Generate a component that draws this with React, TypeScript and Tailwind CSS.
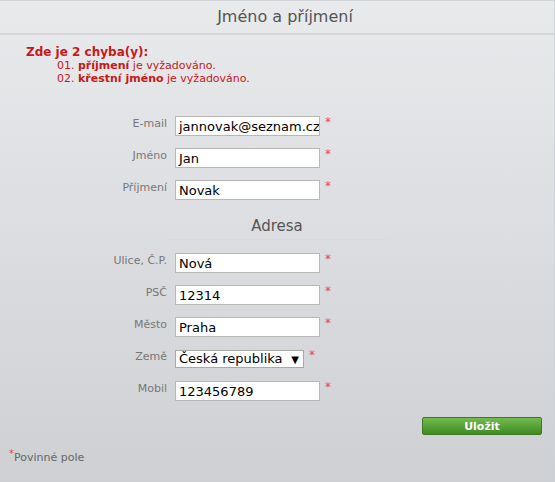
const font = { fontFamily: '"DejaVu Sans", Verdana, sans-serif' }

type Field = { label: string; value: string; select?: boolean }

const personal: Field[] = [
  { label: 'E-mail', value: 'jannovak@seznam.cz' },
  { label: 'Jméno', value: 'Jan' },
  { label: 'Příjmení', value: 'Novak' },
]

const address: Field[] = [
  { label: 'Ulice, Č.P.', value: 'Nová' },
  { label: 'PSČ', value: '12314' },
  { label: 'Město', value: 'Praha' },
  { label: 'Země', value: 'Česká republika', select: true },
  { label: 'Mobil', value: '123456789' },
]

function Row({ field }: { field: Field }) {
  return (
    <div className="flex items-start h-[32px]">
      <label className="w-[167px] text-right text-[11px] text-[#777] pt-[1px] leading-[13px]">
        {field.label}
      </label>
      {field.select ? (
        <div className="ml-[8px] mt-[1px] w-[129px] h-[18px] bg-white border border-[#a9a9a9] flex items-center justify-between pl-[3px] pr-[4px] text-[13px] text-black">
          <span>{field.value}</span>
          <span className="text-[10px]">▼</span>
        </div>
      ) : (
        <div className="ml-[8px] w-[145px] h-[20px] bg-white border border-[#b8b8b8] flex items-center px-[3px] text-[13px] text-black leading-none whitespace-nowrap overflow-hidden">
          {field.value}
        </div>
      )}
      <span className="ml-[5px] text-[#e44] text-[12px] leading-[12px]">*</span>
    </div>
  )
}

export default function App() {
  return (
    <div
      style={font}
      className="w-[555px] h-[482px] border-t border-r border-[#cfd2d6] bg-gradient-to-b from-[#e9eaec] to-[#cfd0d4]"
    >
      <div className="h-[34px] border-b-2 border-[#d3d5d9] flex items-center justify-center text-[16px] text-[#555] pl-[16px]">
        Jméno a příjmení
      </div>

      <div className="pl-[26px] pt-[11px] text-[#c81818]">
        <div className="text-[12px] font-bold leading-[13px]">Zde je 2 chyba(y):</div>
        <div className="pl-[31px] text-[11px] leading-[13px]">
          <div>
            01. <b>příjmení</b> je vyžadováno.
          </div>
          <div>
            02. <b>křestní jméno</b> je vyžadováno.
          </div>
        </div>
      </div>

      <div className="pt-[31px]">
        {personal.map((f) => (
          <Row key={f.label} field={f} />
        ))}
      </div>

      <div className="ml-[167px] w-[220px] h-[32px] pt-[6px] border-b border-[#d8d9dc] flex items-center justify-center text-[15px] text-[#555] -mt-[4px]">
        Adresa
      </div>

      <div className="pt-[13px]">
        {address.map((f) => (
          <Row key={f.label} field={f} />
        ))}
      </div>

      <div className="flex justify-end pr-[12px] mt-[4px]">
        <button className="w-[120px] h-[18px] rounded-[2px] border border-[#3f7a23] bg-gradient-to-b from-[#74bb4f] to-[#3f8a23] text-white text-[11px] font-bold leading-none">
          Uložit
        </button>
      </div>

      <div className="pl-[9px] pt-[14px] text-[11px] text-[#666] flex items-start">
        <span className="text-[#e44] text-[10px] leading-[10px]">*</span>
        <span className="leading-[13px] mt-[2px]">Povinné pole</span>
      </div>
    </div>
  )
}
